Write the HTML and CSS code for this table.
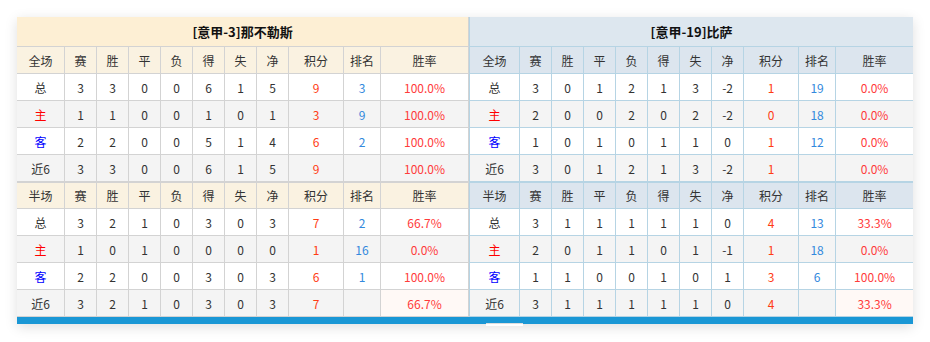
FILE: index.html
```html
<!DOCTYPE html>
<html lang="zh-CN">
<head>
    <meta charset="UTF-8">
    <title>积分排名</title>
    <link rel="stylesheet" href="styles.css">
</head>
<body>
    <div class="panel">
        <div class="teams">
            <table class="stats home">
                <colgroup>
                    <col class="c-type"><col class="c-num"><col class="c-num"><col class="c-num"><col class="c-num"><col class="c-num"><col class="c-num"><col class="c-num"><col class="c-pts"><col class="c-rank"><col class="c-rate">
                </colgroup>
                <tr class="team-title"><td colspan="11">[意甲-3]那不勒斯</td></tr>
                <tr class="head">
                    <td>全场</td><td>赛</td><td>胜</td><td>平</td><td>负</td><td>得</td><td>失</td><td>净</td><td>积分</td><td>排名</td><td>胜率</td>
                </tr>
                <tr><td>总</td><td>3</td><td>3</td><td>0</td><td>0</td><td>6</td><td>1</td><td>5</td><td class="pts">9</td><td class="rank">3</td><td class="rate">100.0%</td></tr>
                <tr class="odd"><td class="home-tag">主</td><td>1</td><td>1</td><td>0</td><td>0</td><td>1</td><td>0</td><td>1</td><td class="pts">3</td><td class="rank">9</td><td class="rate">100.0%</td></tr>
                <tr><td class="away-tag">客</td><td>2</td><td>2</td><td>0</td><td>0</td><td>5</td><td>1</td><td>4</td><td class="pts">6</td><td class="rank">2</td><td class="rate">100.0%</td></tr>
                <tr class="odd"><td>近6</td><td>3</td><td>3</td><td>0</td><td>0</td><td>6</td><td>1</td><td>5</td><td class="pts">9</td><td class="rank"></td><td class="rate">100.0%</td></tr>
                <tr class="head half">
                    <td>半场</td><td>赛</td><td>胜</td><td>平</td><td>负</td><td>得</td><td>失</td><td>净</td><td>积分</td><td>排名</td><td>胜率</td>
                </tr>
                <tr><td>总</td><td>3</td><td>2</td><td>1</td><td>0</td><td>3</td><td>0</td><td>3</td><td class="pts">7</td><td class="rank">2</td><td class="rate">66.7%</td></tr>
                <tr class="odd"><td class="home-tag">主</td><td>1</td><td>0</td><td>1</td><td>0</td><td>0</td><td>0</td><td>0</td><td class="pts">1</td><td class="rank">16</td><td class="rate">0.0%</td></tr>
                <tr><td class="away-tag">客</td><td>2</td><td>2</td><td>0</td><td>0</td><td>3</td><td>0</td><td>3</td><td class="pts">6</td><td class="rank">1</td><td class="rate">100.0%</td></tr>
                <tr class="odd last"><td>近6</td><td>3</td><td>2</td><td>1</td><td>0</td><td>3</td><td>0</td><td>3</td><td class="pts">7</td><td class="rank"></td><td class="rate">66.7%</td></tr>
            </table>

            <table class="stats away">
                <colgroup>
                    <col class="c-type"><col class="c-num"><col class="c-num"><col class="c-num"><col class="c-num"><col class="c-num"><col class="c-num"><col class="c-num"><col class="c-pts"><col class="c-rank"><col class="c-rate">
                </colgroup>
                <tr class="team-title"><td colspan="11">[意甲-19]比萨</td></tr>
                <tr class="head">
                    <td>全场</td><td>赛</td><td>胜</td><td>平</td><td>负</td><td>得</td><td>失</td><td>净</td><td>积分</td><td>排名</td><td>胜率</td>
                </tr>
                <tr><td>总</td><td>3</td><td>0</td><td>1</td><td>2</td><td>1</td><td>3</td><td>-2</td><td class="pts">1</td><td class="rank">19</td><td class="rate">0.0%</td></tr>
                <tr class="odd"><td class="home-tag">主</td><td>2</td><td>0</td><td>0</td><td>2</td><td>0</td><td>2</td><td>-2</td><td class="pts">0</td><td class="rank">18</td><td class="rate">0.0%</td></tr>
                <tr><td class="away-tag">客</td><td>1</td><td>0</td><td>1</td><td>0</td><td>1</td><td>1</td><td>0</td><td class="pts">1</td><td class="rank">12</td><td class="rate">0.0%</td></tr>
                <tr class="odd"><td>近6</td><td>3</td><td>0</td><td>1</td><td>2</td><td>1</td><td>3</td><td>-2</td><td class="pts">1</td><td class="rank"></td><td class="rate">0.0%</td></tr>
                <tr class="head half">
                    <td>半场</td><td>赛</td><td>胜</td><td>平</td><td>负</td><td>得</td><td>失</td><td>净</td><td>积分</td><td>排名</td><td>胜率</td>
                </tr>
                <tr><td>总</td><td>3</td><td>1</td><td>1</td><td>1</td><td>1</td><td>1</td><td>0</td><td class="pts">4</td><td class="rank">13</td><td class="rate">33.3%</td></tr>
                <tr class="odd"><td class="home-tag">主</td><td>2</td><td>0</td><td>1</td><td>1</td><td>0</td><td>1</td><td>-1</td><td class="pts">1</td><td class="rank">18</td><td class="rate">0.0%</td></tr>
                <tr><td class="away-tag">客</td><td>1</td><td>1</td><td>0</td><td>0</td><td>1</td><td>0</td><td>1</td><td class="pts">3</td><td class="rank">6</td><td class="rate">100.0%</td></tr>
                <tr class="odd last"><td>近6</td><td>3</td><td>1</td><td>1</td><td>1</td><td>1</td><td>1</td><td>0</td><td class="pts">4</td><td class="rank"></td><td class="rate">33.3%</td></tr>
            </table>
        </div>
        <div class="bar"></div>
        <div class="tab"></div>
    </div>
</body>
</html>
```

FILE: styles.css
```css
body {
    margin: 0;
    padding: 17px;
    background: #fff;
    font-family: "Noto Sans CJK SC", "Microsoft YaHei", sans-serif;
    font-size: 12px;
    color: #333;
}

.panel {
    position: relative;
    width: 896px;
    box-shadow: 0 3px 12px rgba(0, 0, 0, 0.13);
}

.teams {
    display: flex;
}

.stats {
    border-collapse: separate;
    border-spacing: 0;
    table-layout: fixed;
}

.stats td {
    padding: 0;
    text-align: center;
    border-right: 1px solid #d3d3d3;
    border-bottom: 1px solid #d3d3d3;
    white-space: nowrap;
    overflow: hidden;
    box-sizing: border-box;
}

.stats tr {
    height: 27px;
}

.stats tr.odd td {
    background: #f4f4f4;
}

/* home side */
.home {
    width: 452px;
}

.home .c-type { width: 48px; }
.home .c-rate { width: 88px; }

/* away side */
.away {
    width: 444px;
    border-left: 1px solid #b6d4e4;
}

.away td {
    border-color: #b6d4e4;
}

.away .c-type { width: 50px; }
.away .c-rate { width: 77px; }

.away td:last-child {
    border-right: none;
}

.c-num { width: 32px; }
.c-pts { width: 55px; }
.c-rank { width: 37px; }

.team-title {
    height: 30px !important;
}

.team-title td {
    font-size: 13px;
    font-weight: bold;
    color: #111;
}

.home .team-title td { background: #fdefd4; }
.away .team-title td { background: #dde7ef; }

.home .head td { background: #faf2e1; }
.away .head td { background: #dce5ee; }

.head.half td {
    border-top: 1px solid #d3d3d3;
}

.away .head.half td {
    border-top-color: #b6d4e4;
}

.home-tag { color: #f00; }
.away-tag { color: #00f; }

.pts { color: #ff3c14; }
.rank { color: #3389dd; }
.rate { color: #ff3b3b; }

.stats tr.last td.rate {
    background: #fff9f6;
}

.bar {
    height: 7px;
    background: #1a97d5;
}

.tab {
    position: absolute;
    left: 469px;
    bottom: -2px;
    width: 37px;
    height: 2px;
    background: #fff;
    border-top: 1px solid #ddd;
}
```
